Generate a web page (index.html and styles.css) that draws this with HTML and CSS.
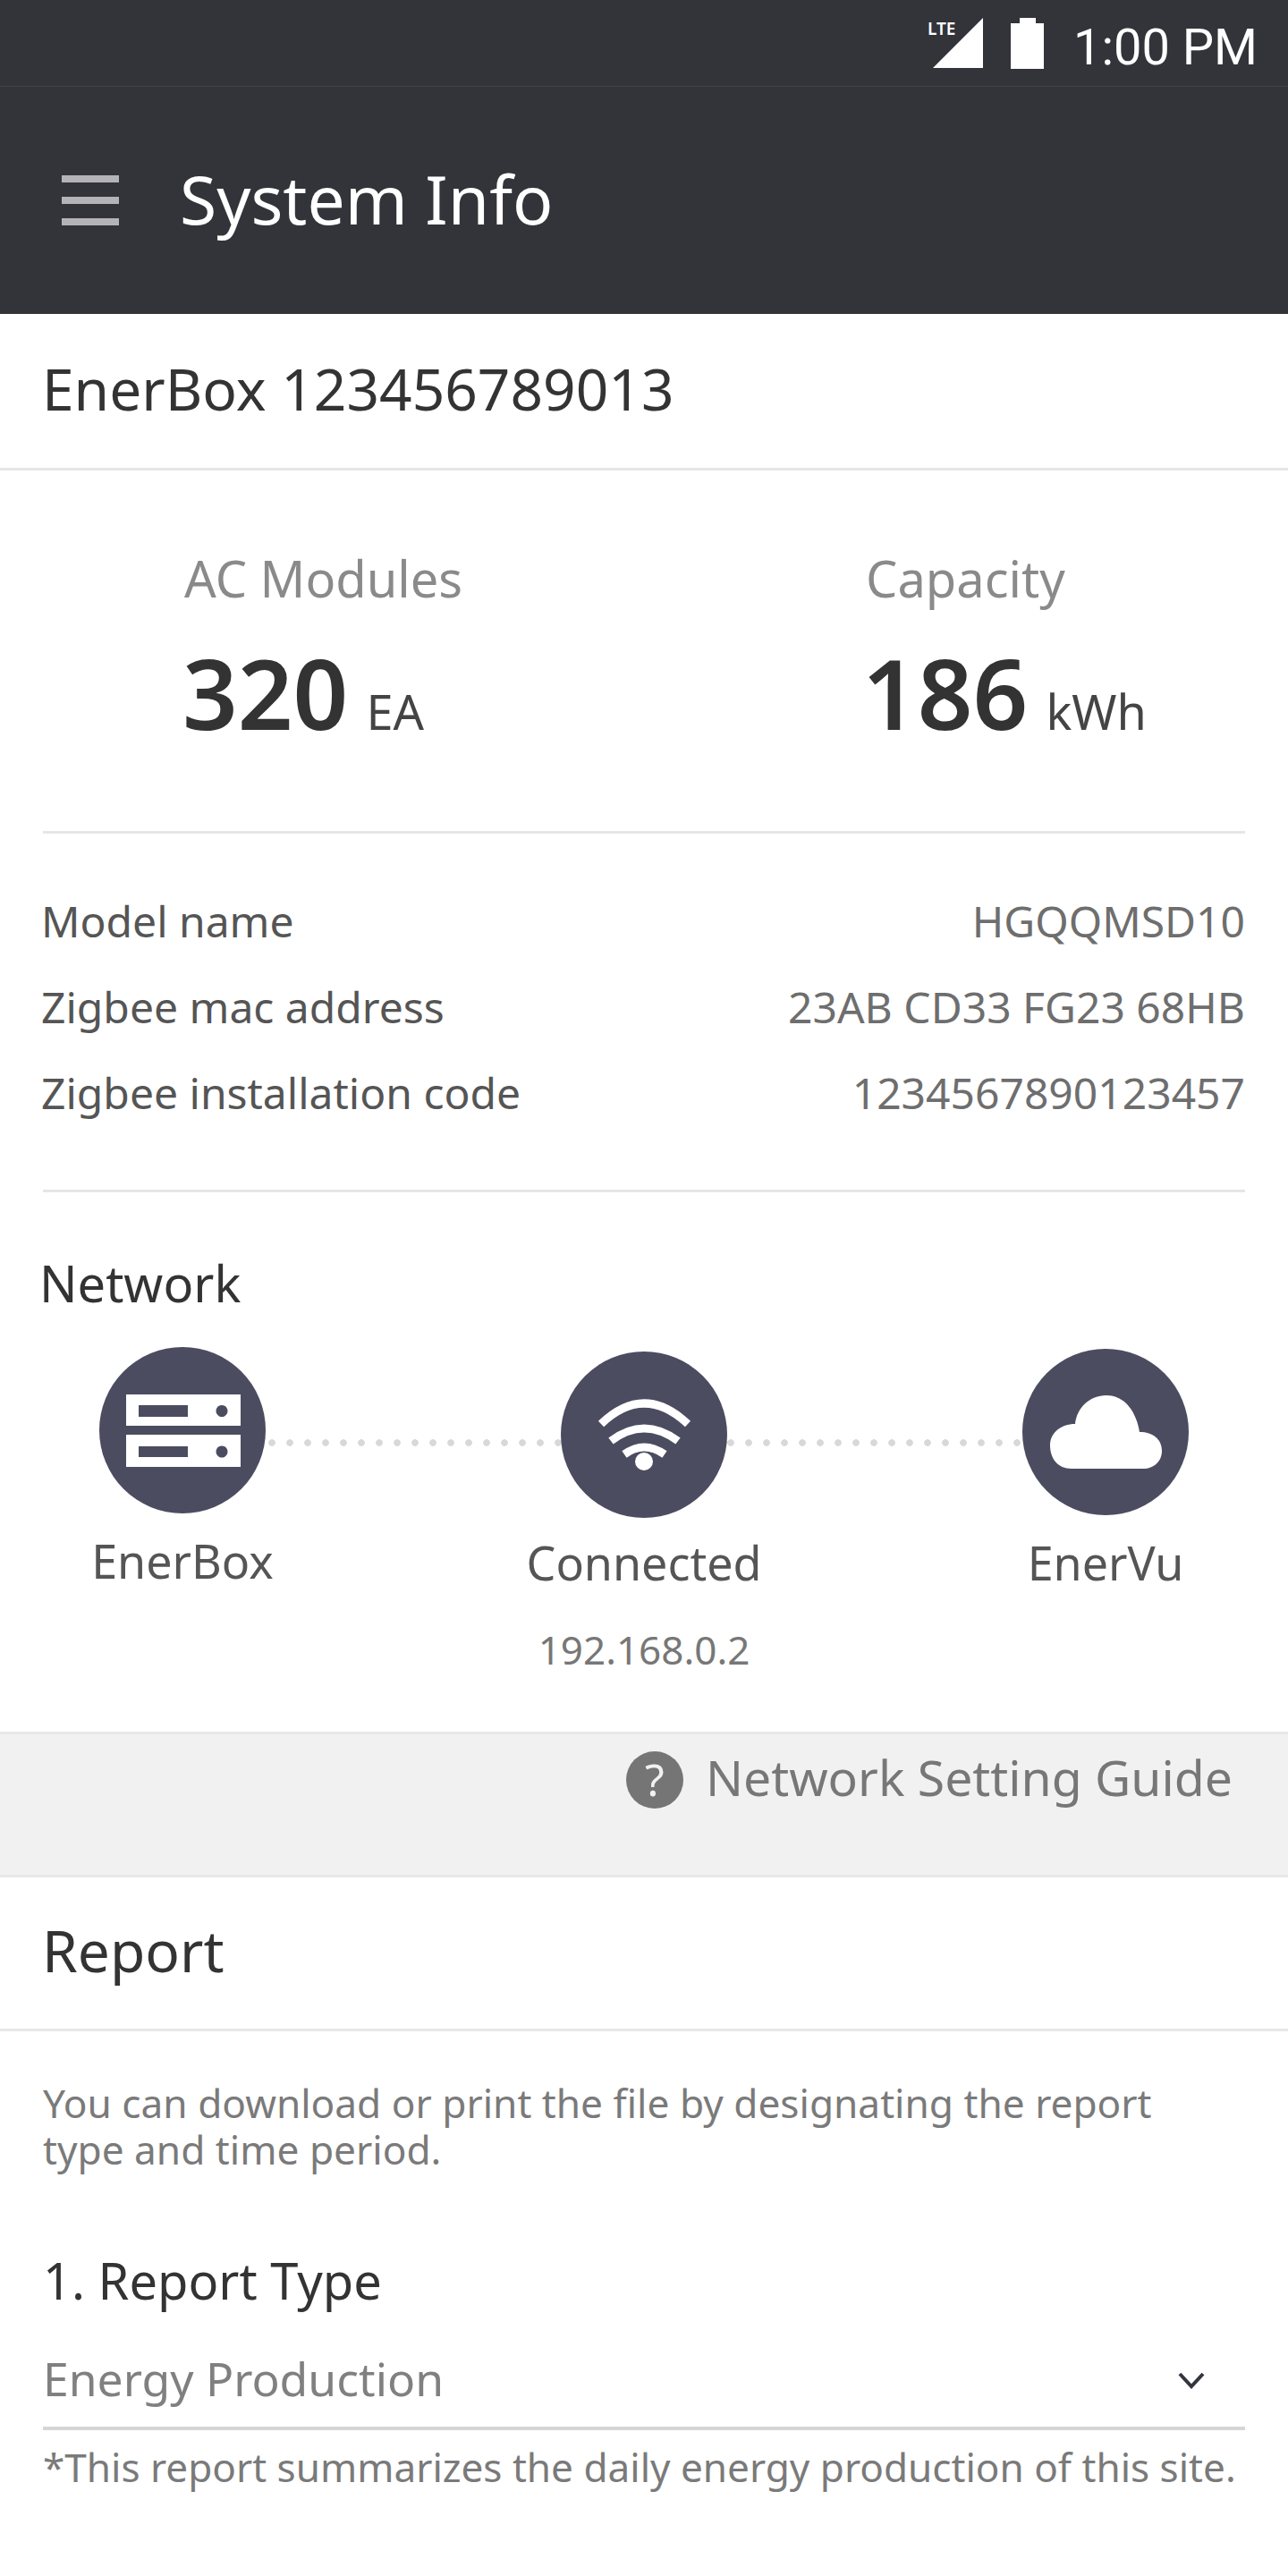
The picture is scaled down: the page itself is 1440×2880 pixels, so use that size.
FILE: index.html
```html
<!DOCTYPE html>
<html lang="en">
<head>
<meta charset="utf-8">
<title>System Info</title>
<link rel="stylesheet" href="styles.css">
</head>
<body>
<div class="status-bar">
  <div class="signal">
    <svg class="signal-icon" width="56" height="56" viewBox="0 0 56 56"><path d="M56 0V56H0Z" fill="#fff"/></svg>
    <span class="lte">LTE</span>
  </div>
  <svg class="battery" width="37" height="57" viewBox="0 0 37 57"><path d="M10 0H28V6H37V57H0V6H10Z" fill="#fff"/></svg>
  <span class="clock">1:00 PM</span>
</div>
<header class="app-bar">
  <div class="menu"><i></i><i></i><i></i></div>
  <h1 class="app-title">System Info</h1>
</header>
<section class="device-row">EnerBox 123456789013</section>
<section class="stats">
  <div class="stat stat-left">
    <div class="stat-label">AC Modules</div>
    <div class="stat-value"><b>320</b> <span>EA</span></div>
  </div>
  <div class="stat stat-right">
    <div class="stat-label">Capacity</div>
    <div class="stat-value"><b>186</b> <span>kWh</span></div>
  </div>
</section>
<section class="specs">
  <div class="spec"><span class="spec-key">Model name</span><span class="spec-val">HGQQMSD10</span></div>
  <div class="spec"><span class="spec-key">Zigbee mac address</span><span class="spec-val">23AB CD33 FG23 68HB</span></div>
  <div class="spec"><span class="spec-key">Zigbee installation code</span><span class="spec-val">1234567890123457</span></div>
</section>
<section class="network">
  <h2 class="network-title">Network</h2>
  <div class="net-grid">
    <div class="net-node">
      <div class="net-circle">
        <svg class="icon-server" width="128" height="81" viewBox="0 0 128 81"><path fill="#fff" fill-rule="evenodd" d="M0 0H128V35H0ZM14 12V25H69V12ZM107 12a6.500 6.500 0 1 0 .01 0Z"/><path fill="#fff" fill-rule="evenodd" d="M0 45H128V81H0ZM14 58V70H69V58ZM107 57.500a6.500 6.500 0 1 0 .01 0Z"/></svg>
      </div>
      <div class="net-label">EnerBox</div>
    </div>
    <div class="net-dots dots-a"></div>
    <div class="net-node node-b">
      <div class="net-circle">
        <svg width="105" height="80" viewBox="0 0 105 80"><path fill="none" stroke="#fff" stroke-width="9" d="M4 28Q52 -18 101 28M15 47Q52 19 90 47M30 62Q52 46 75 62"/><circle cx="52" cy="70" r="10" fill="#fff"/></svg>
      </div>
      <div class="net-label net-label-b">Connected</div>
      <div class="net-ip">192.168.0.2</div>
    </div>
    <div class="net-dots dots-b"></div>
    <div class="net-node node-c">
      <div class="net-circle">
        <svg width="125" height="82" viewBox="0 0 125 82"><path fill="#fff" d="M24 82C8 82 0 70 0 56C0 42 12 32 28 32C30 14 44 0 63 0C82 0 96 16 100 41C115 41 125 49 125 62C125 74 116 82 104 82Z"/></svg>
      </div>
      <div class="net-label">EnerVu</div>
    </div>
  </div>
</section>
<section class="guide">
  <span class="guide-q">?</span>
  <span class="guide-text">Network Setting Guide</span>
</section>
<section class="report-head">Report</section>
<section class="report">
  <p class="report-desc">You can download or print the file by designating the report type and time period.</p>
  <h3 class="report-type">1. Report Type</h3>
  <div class="select">
    <span>Energy Production</span>
    <svg width="32" height="20" viewBox="0 0 32 20"><path d="M3 3L16 17L29 3" fill="none" stroke="#33353f" stroke-width="4"/></svg>
  </div>
  <p class="note">*This report summarizes the daily energy production of this site.</p>
</section>
</body>
</html>
```
FILE: styles.css
```css
* { box-sizing: border-box; }
html, body { margin: 0; padding: 0; }
body {
  width: 1440px;
  height: 2880px;
  overflow: hidden;
  background: #fff;
  font-family: "Noto Sans", "Open Sans", sans-serif;
  color: #333;
}
h1, h2, h3, p { margin: 0; font-weight: 400; }

.status-bar {
  height: 97px;
  background: #33333a;
  border-bottom: 1px solid #44444b;
  display: flex;
  align-items: center;
  justify-content: flex-end;
  padding: 0 34px 0 0;
  color: #fff;
}
.signal { position: relative; width: 62px; height: 56px; margin-right: 31px; }
.signal-icon { position: absolute; right: 0; top: 0; }
.lte {
  position: absolute; left: 0; top: 0;
  font-size: 19px; line-height: 24px; font-weight: 600; color: #fff;
}
.battery { margin-right: 33px; }
.clock { font-family: Roboto, sans-serif; font-size: 56px; line-height: 60px; padding-top: 9px; }

.app-bar {
  height: 254px;
  background: #33333a;
  display: flex;
  align-items: center;
  padding-left: 69px;
}
.menu { width: 64px; display: flex; flex-direction: column; gap: 16px; margin-right: 68px; }
.menu i { display: block; height: 8px; background: #b4b4b8; }
.app-title { font-size: 75px; color: #fff; line-height: 100px; padding-bottom: 4px; }

.device-row {
  height: 175px;
  border-bottom: 3px solid #e6e6e6;
  display: flex;
  align-items: center;
  padding: 0 0 6px 47px;
  font-size: 64px;
  color: #333;
}

.stats {
  margin: 0 48px;
  height: 406px;
  border-bottom: 3px solid #e6e6e6;
  display: flex;
}
.stat { padding-top: 82px; }
.stat-left { flex: none; width: 916px; padding-left: 156px; }
.stat-label { font-size: 56px; line-height: 76px; color: #8a8a8a; padding-left: 2px; }
.stat-right .stat-label { padding-left: 4px; }
.stat-value { line-height: 130px; font-size: 54px; color: #444; white-space: nowrap; margin-top: 26px; }
.stat-value b { font-size: 108px; font-weight: 600; color: #333; margin-right: 6px; }

.specs {
  margin: 0 48px;
  height: 401px;
  border-bottom: 3px solid #e6e6e6;
  padding-top: 50px;
}
.spec {
  display: flex;
  justify-content: space-between;
  height: 96px;
  font-size: 48px;
  line-height: 96px;
  color: #555;
}
.spec-key { margin-left: -2px; }
.spec-val { color: #6e6e6e; }

.network { height: 603px; }
.network-title { font-size: 56px; line-height: 76px; color: #333; padding: 63px 0 0 44px; height: 173px; }
.net-grid { display: flex; align-items: flex-start; padding-left: 111px; }
.net-node { flex: none; width: 186px; display: flex; flex-direction: column; align-items: center; }
.net-circle {
  width: 186px; height: 186px; border-radius: 50%;
  background: #4b4c60;
  display: flex; align-items: center; justify-content: center;
}
.icon-server { margin-left: 2px; }
.net-label { font-size: 52px; line-height: 70px; color: #555; white-space: nowrap; margin-top: 18px; }
.net-label-b { margin-top: 15px; }
.net-ip { font-size: 44px; line-height: 60px; color: #777; margin-top: 32px; white-space: nowrap; }
.node-b { margin-top: 5px; }
.node-c { margin-top: 2px; margin-left: -1px; }
.net-dots {
  flex: none; width: 330px; height: 8px; margin-top: 103px;
  background-image: radial-gradient(circle, #d8d8d8 3.500px, transparent 4px);
  background-size: 20px 8px;
  background-repeat: repeat-x;
}
.dots-a { background-position: -3px 0; }
.dots-b { width: 331px; background-position: -6px 0; }

.guide {
  height: 163px;
  background: #f1f1f1;
  border-top: 3px solid #e8e8e8;
  border-bottom: 3px solid #e8e8e8;
  display: flex;
  align-items: flex-start;
  justify-content: flex-end;
  gap: 25px;
  padding: 19px 62px 0 0;
}
.guide-q {
  flex: none;
  width: 64px; height: 64px; border-radius: 50%;
  background: #757575;
  color: #f1f1f1;
  font-size: 50px;
  line-height: 62px;
  text-align: center;
}
.guide-text { font-size: 55.300px; line-height: 58px; color: #777; }

.report-head {
  height: 172px;
  border-bottom: 3px solid #e8e8e8;
  display: flex; align-items: center;
  padding: 0 0 6px 47px;
  font-size: 64px;
  color: #333;
}
.report { padding: 54px 48px 0; }
.report-desc { font-size: 44.200px; line-height: 52px; color: #7a7a7a; padding-right: 60px; }
.report-type { font-size: 56px; line-height: 72px; color: #333; margin-top: 84px; }
.select {
  display: flex; justify-content: space-between; align-items: center;
  height: 105px; margin-top: 27px;
  padding: 0 44px 7px 0;
  font-size: 51.600px; color: #808080;
  border-bottom: 4px solid #d6d6d6;
}
.select svg { margin-top: 3px; }
.note { font-size: 44.100px; line-height: 60px; color: #7a7a7a; margin-top: 11px; white-space: nowrap; }
```
